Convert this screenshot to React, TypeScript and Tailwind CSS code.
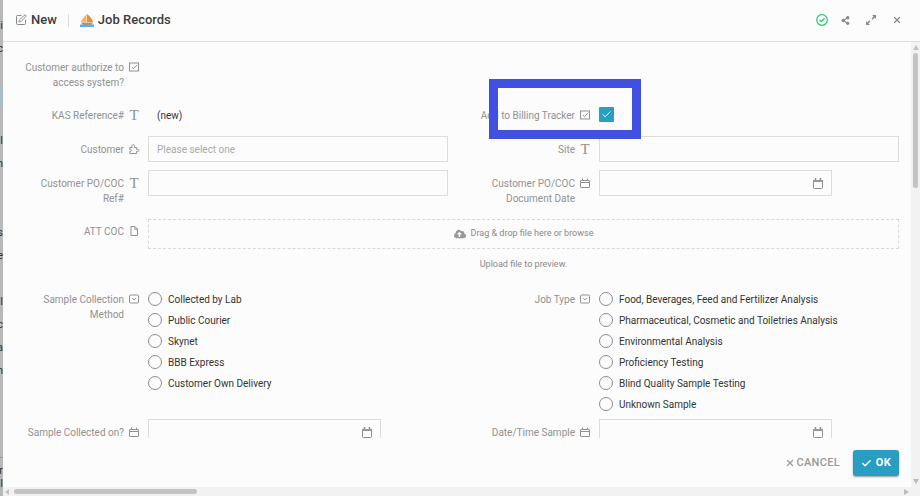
import type { ReactNode } from "react";
import { Check, SquarePen, X } from "lucide-react";
import { FaCloudUploadAlt, FaShareAlt } from "react-icons/fa";

type IconName = "check" | "text" | "puzzle" | "calendar" | "file" | "select";

const backdropRows = ["i", "c", "", "", "", "l", "n", "", "", "s", "e", "", "l", "c", "a", "n"];

const collectionMethods = [
	"Collected by Lab",
	"Public Courier",
	"Skynet",
	"BBB Express",
	"Customer Own Delivery",
];

const jobTypes = [
	"Food, Beverages, Feed and Fertilizer Analysis",
	"Pharmaceutical, Cosmetic and Toiletries Analysis",
	"Environmental Analysis",
	"Proficiency Testing",
	"Blind Quality Sample Testing",
	"Unknown Sample",
];

const iconPaths: Record<Exclude<IconName, "text">, ReactNode> = {
	check: (
		<>
			<rect height="8" width="9" x=".5" y="1" />
			<path d="M2.800 5l1.700 1.600L8.200 3" />
		</>
	),
	puzzle: (
		<path d="M.8 3.500h2.400C2.400 1.800 3.200.6 4.200.6s1.800 1.200 1 2.900h2.500v2c1.300-.5 2.100 0 2.100.9s-.8 1.400-2.100.9v2.200H.8V7.300c1.300.3 1.700-.3 1.700-.9S2 5.300.8 5.500z" />
	),
	calendar: (
		<>
			<rect height="7" rx=".5" width="9" x=".5" y="2.500" />
			<path d="M.5 4.500h9M2.500 .5v2M7.500 .5v2" />
		</>
	),
	file: (
		<>
			<path d="M2 .5h4L8.500 3v6.500H2z" />
			<path d="M5.800 .8v2.500h2.500" />
		</>
	),
	select: (
		<>
			<rect height="8" rx="1" width="9" x=".5" y="1" />
			<path d="M3.200 4.200L5 5.800l1.800-1.600" />
		</>
	),
};

const FieldIcon = ({ name }: { name: IconName }) =>
	name === "text" ? (
		<span
			aria-hidden="true"
			className="w-[10px] shrink-0 text-center font-['Liberation_Serif',serif] text-[15px]"
		>
			T
		</span>
	) : (
		<svg
			aria-hidden="true"
			className="mt-[2px] size-[10px] shrink-0 overflow-visible"
			fill="none"
			stroke="currentColor"
			viewBox="0 0 10 10"
		>
			{iconPaths[name]}
		</svg>
	);

type FieldProps = {
	label: string;
	icon: IconName;
	id: string;
	group?: boolean;
	wide?: boolean;
	children?: ReactNode;
};

const Field = ({ label, icon, id, group, wide, children }: FieldProps) => {
	const Label = group ? "div" : "label";

	return (
		<div className={wide ? "col-span-2 flex gap-[9px]" : "flex gap-[9px]"}>
			<Label
				className="flex w-[124px] shrink-0 gap-[5px] pt-[6px] pb-1 pl-2 text-right text-[#919191] leading-[15px]"
				htmlFor={group ? undefined : id}
				id={group ? `${id}-label` : undefined}
			>
				<span className="flex-1">{label}</span>
				<FieldIcon name={icon} />
			</Label>
			<div className="min-w-0 flex-1">{children}</div>
		</div>
	);
};

const TextBox = ({ id }: { id: string }) => (
	<input
		className="block h-[26px] w-full border border-[#dcdcdc] bg-transparent px-2 text-[#444] outline-none"
		id={id}
		type="text"
	/>
);

const DateBox = ({ id }: { id: string }) => (
	<div className="flex h-[26px] w-[233px] items-center border border-[#dcdcdc] pr-2">
		<input className="h-full min-w-0 flex-1 px-2 outline-none" id={id} type="text" />
		<svg aria-hidden="true" className="h-[11px] w-[10px]" fill="none" viewBox="0 0 10 11">
			<rect height="8" rx="1" stroke="#8c8c8c" width="9" x=".5" y="2.500" />
			<path d="M0 2h10v2H0z" fill="#999" />
			<path d="M2.500 0v2M7.500 0v2" stroke="#8c8c8c" strokeWidth="1.500" />
		</svg>
	</div>
);

const RadioGroup = ({ name, options }: { name: string; options: string[] }) => (
	<div aria-labelledby={`${name}-label`} className="grid gap-[7px] pt-[6px]" role="radiogroup">
		{options.map((option) => (
			<label className="flex h-[14px] items-center gap-[6px] text-[#333]" key={option}>
				<input
					className="size-[14px] shrink-0 appearance-none rounded-full border border-[#8c8c8c] checked:bg-[#2a9dc3]"
					name={name}
					type="radio"
				/>
				{option}
			</label>
		))}
	</div>
);

const Header = () => (
	<header className="flex h-[42px] shrink-0 items-center border-[#dedede] border-b pr-[18px] pb-px pl-3 text-[#3c3c3c]">
		<SquarePen className="size-3 text-[#888]" />
		<h1 className="ml-1 font-medium text-[13px]">New</h1>
		<span className="mx-[11px] h-[13px] border-[#ddd] border-l" />
		<svg aria-hidden="true" className="mr-1 h-[13px] w-[14px]" viewBox="0 0 14 13">
			<path d="M6.500 0C4 3 1.500 6 1 8H6.500z" fill="#efb45d" />
			<path d="M7 0c3 2 5.500 5 6 8H7z" fill="#e8913a" />
			<path d="M1 8.500h12L11.500 11h-9z" fill="#c98b56" />
			<path d="M0 10.500h14V13H0z" fill="#5aaeea" />
		</svg>
		<h2 className="flex-1 font-medium text-[13px]">Job Records</h2>
		<div className="flex items-center text-[#888]">
			<button aria-label="Saved" className="mr-[13px] text-[#2fc273]" type="button">
				<svg className="size-3" fill="none" stroke="currentColor" viewBox="0 0 12 12">
					<circle cx="6" cy="6" r="5.300" strokeWidth="1.200" />
					<path d="M3.500 6l1.800 1.700L8.600 4.300" strokeWidth="1.300" />
				</svg>
			</button>
			<button aria-label="Share" className="mr-4" type="button">
				<FaShareAlt className="size-[9px]" />
			</button>
			<button aria-label="Maximize" className="mr-4" type="button">
				<svg className="size-[10px]" viewBox="0 0 10 10">
					<path
						d="M6 0h4v4L8.600 2.600 6.500 4.700l-1-1 2-2.200zM4 10H0V6l1.400 1.400 2.100-2.100 1 1-2.100 2.200z"
						fill="currentColor"
					/>
				</svg>
			</button>
			<button aria-label="Close" type="button">
				<X className="size-[10px]" strokeWidth={3} />
			</button>
		</div>
	</header>
);

const Footer = () => (
	<footer className="flex shrink-0 items-center justify-end gap-[13px] px-3 pt-3 pb-[11px] text-[11px]">
		<button
			className="flex items-center gap-[2px] font-medium text-[#999] tracking-wide"
			type="button"
		>
			<X className="size-[10px]" strokeWidth={3} />
			CANCEL
		</button>
		<button
			className="flex h-[26px] items-center gap-1 rounded-[3px] bg-[#2a9dc3] px-2 font-bold text-white tracking-wide shadow-[0_1px_2px_rgba(0,0,0,0.4)]"
			type="button"
		>
			<Check className="size-[11px]" strokeWidth={3} />
			OK
		</button>
	</footer>
);

const VerticalBar = () => (
	<div className="flex w-[9px] shrink-0 flex-col items-center bg-[#f2f2f2] py-[3px]">
		<span className="border-x-[3px] border-x-transparent border-b-[#c2c2c2] border-b-[5px]" />
		<span className="mt-[3px] h-[135px] w-[5px] rounded-full bg-[#c4c4c4]" />
		<span className="mt-auto border-x-[3px] border-x-transparent border-t-[#bbb] border-t-[5px]" />
	</div>
);

const HorizontalBar = () => (
	<div className="flex h-[9px] shrink-0 items-center bg-[#f2f2f2] pr-[9px] pl-[2px]">
		<span className="border-y-[3px] border-y-transparent border-r-[#c2c2c2] border-r-[4px]" />
		<span className="ml-[5px] h-[5px] w-[183px] rounded-full bg-[#c4c4c4]" />
		<span className="mr-[2px] ml-auto border-y-[3px] border-y-transparent border-l-[#bbb] border-l-[5px]" />
	</div>
);

export default function App() {
	return (
		<div className="flex h-screen overflow-hidden bg-[#b8b8b8] font-[Roboto,sans-serif] text-[10px]">
			<div
				aria-hidden="true"
				className="w-[3px] shrink-0 overflow-hidden pt-[15px] text-[#333] text-[11px]"
			>
				{backdropRows.map((text, index) => (
					<div
						className={
							index === 3
								? "h-[23px] bg-[#a9bdc8]"
								: "flex h-[23px] items-center justify-end"
						}
						key={index}
					>
						{text}
					</div>
				))}
				<div className="mt-[74px] flex flex-col items-end border-[#999] border-t pt-[6px] leading-[13px]">
					<span>r</span>
					<span>l</span>
				</div>
			</div>
			<div className="flex min-w-0 flex-1 flex-col bg-[#fcfcfc]">
				<Header />
				<div className="flex min-h-0 flex-1">
					<div className="flex min-w-0 flex-1 flex-col">
						<main className="min-h-0 flex-1 overflow-hidden px-3 pt-3">
							<form className="grid grid-cols-2 gap-x-[18px] gap-y-2">
								<Field
									icon="check"
									id="authorize"
									label="Customer authorize to access system?"
									wide
								/>
								<Field group icon="text" id="reference" label="KAS Reference#">
									<p className="pt-[6px] pl-[9px] text-[#333] leading-[15px]">(new)</p>
								</Field>
								<div className="relative h-[26px]">
									<Field icon="check" id="billing" label="Add to Billing Tracker">
										<div className="grid w-[15px] place-items-center pt-[5px]">
											<input
												className="col-start-1 row-start-1 size-[15px] appearance-none rounded-[1px] bg-[#2a9dc3]"
												defaultChecked
												id="billing"
												type="checkbox"
											/>
											<Check className="pointer-events-none col-start-1 row-start-1 size-[11px] text-white" />
										</div>
									</Field>
									<div className="pointer-events-none absolute -top-[23px] left-[23px] h-[60px] w-[152px] border-[#4150e0] border-[9px]" />
								</div>
								<Field icon="puzzle" id="customer" label="Customer">
									<select
										className="block h-[26px] w-full appearance-none border border-[#dcdcdc] bg-transparent px-2 text-[#aaa] outline-none"
										id="customer"
									>
										<option>Please select one</option>
									</select>
								</Field>
								<Field icon="text" id="site" label="Site">
									<TextBox id="site" />
								</Field>
								<Field icon="text" id="po-ref" label="Customer PO/COC Ref#">
									<TextBox id="po-ref" />
								</Field>
								<Field icon="calendar" id="po-date" label="Customer PO/COC Document Date">
									<DateBox id="po-date" />
								</Field>
								<Field group icon="file" id="coc" label="ATT COC" wide>
									<div className="h-[60px] pt-px text-center text-[#888] text-[9px]">
										<button
											className="flex h-[30px] w-full items-center justify-center gap-[5px] border border-[#d8d8d8] border-dashed"
											type="button"
										>
											<FaCloudUploadAlt className="size-3 text-[#999]" />
											Drag &amp; drop file here or browse
										</button>
										<p className="pt-2 leading-[15px]">Upload file to preview.</p>
									</div>
								</Field>
								<Field group icon="select" id="method" label="Sample Collection Method">
									<RadioGroup name="method" options={collectionMethods} />
								</Field>
								<Field group icon="select" id="job-type" label="Job Type">
									<RadioGroup name="job-type" options={jobTypes} />
								</Field>
								<Field icon="calendar" id="collected" label="Sample Collected on?">
									<DateBox id="collected" />
								</Field>
								<Field icon="calendar" id="sampled" label="Date/Time Sample">
									<DateBox id="sampled" />
								</Field>
							</form>
						</main>
						<Footer />
					</div>
					<VerticalBar />
				</div>
				<HorizontalBar />
			</div>
		</div>
	);
}
